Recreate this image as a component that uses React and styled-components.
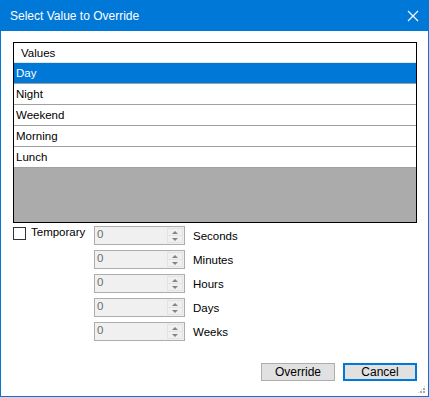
import React from 'react'
import styled, { createGlobalStyle } from 'styled-components'

const Global = createGlobalStyle`
  html, body { margin: 0; padding: 0; background: #fff; }
  * { box-sizing: border-box; }
`

const Window = styled.div`
  width: 429px;
  height: 397px;
  border: 1px solid #0078d7;
  border-top: none;
  background: #fff;
  display: flex;
  flex-direction: column;
  position: relative;
  font-family: "Liberation Sans", Arial, sans-serif;
  font-size: 11.5px;
  color: #000;
`

const TitleBar = styled.div`
  height: 31px;
  margin: 0 -1px;
  background: #0078d7;
  color: #fff;
  display: flex;
  align-items: center;
  justify-content: space-between;
  padding: 0 10px 0 10px;
  font-size: 12px;
`

const CloseIcon = () => (
  <svg width="12" height="12" viewBox="0 0 12 12">
    <path d="M1 1 L11 11 M11 1 L1 11" stroke="#fff" strokeWidth="1.2" />
  </svg>
)

const Body = styled.div`
  flex: 1;
  display: flex;
  flex-direction: column;
  padding: 11px 11px 0 12px;
`

const List = styled.div`
  height: 181px;
  border: 1px solid #000;
  background: #ababab;
  display: flex;
  flex-direction: column;
`

const Header = styled.div`
  height: 20px;
  background: #fff;
  border-bottom: 1px solid #e5e5e5;
  padding-left: 7px;
  display: flex;
  align-items: center;
`

const Row = styled.div`
  height: 21px;
  padding-left: 2px;
  display: flex;
  align-items: center;
  background: ${p => (p.$selected ? '#0078d7' : '#fff')};
  color: ${p => (p.$selected ? '#fff' : '#000')};
  border-bottom: 1px solid #a0a0a0;
`

const Options = styled.div`
  display: grid;
  grid-template-columns: 81px 99px auto;
  grid-auto-rows: 19px;
  row-gap: 5px;
  margin-top: 3px;
`

const CheckCell = styled.label`
  display: flex;
  align-items: flex-start;
  gap: 5px;
`

const Box = styled.span`
  width: 13px;
  height: 13px;
  border: 1px solid #333;
  background: #fff;
  margin-top: 1px;
`

const Spinner = styled.div`
  width: 91px;
  height: 19px;
  border: 1px solid #adadad;
  background: #f0f0f0;
  display: flex;
  color: #6d6d6d;
`

const SpinValue = styled.div`
  flex: 1;
  padding-left: 2px;
  line-height: 15px;
`

const SpinButtons = styled.div`
  width: 16px;
  margin: 1px 1px 1px 0;
  border: 1px solid #e3e3e3;
  display: flex;
  flex-direction: column;
`

const SpinHalf = styled.div`
  flex: 1;
  display: flex;
  align-items: center;
  justify-content: center;
  & + & { border-top: 1px solid #e3e3e3; }
`

const Arrow = styled.span`
  width: 0;
  height: 0;
  border-left: 3px solid transparent;
  border-right: 3px solid transparent;
  ${p => (p.$down ? 'border-top: 3px solid #838383;' : 'border-bottom: 3px solid #838383;')}
`

const UnitLabel = styled.div`
  line-height: 19px;
  padding-top: 1px;
`

const Buttons = styled.div`
  margin-top: auto;
  margin-bottom: 15px;
  display: flex;
  justify-content: flex-end;
  gap: 8px;
`

const Button = styled.button`
  width: 74px;
  height: 18px;
  font-family: inherit;
  font-size: 12px;
  padding: 0;
  background: #e1e1e1;
  color: #000;
  border: ${p => (p.$primary ? '2px solid #0078d7' : '1px solid #adadad')};
  outline: none;
`

const Grip = styled.div`
  position: absolute;
  right: 2px;
  bottom: 2px;
  width: 9px;
  height: 9px;
  background:
    radial-gradient(circle at 1px 1px, #a8a8a8 1px, transparent 1.1px) 0 0 / 3px 3px;
  clip-path: polygon(100% 0, 100% 100%, 0 100%);
`

const values = ['Day', 'Night', 'Weekend', 'Morning', 'Lunch']
const units = ['Seconds', 'Minutes', 'Hours', 'Days', 'Weeks']

const App = () => {
  return (
    <>
      <Global />
      <Window>
        <TitleBar>
          <span>Select Value to Override</span>
          <CloseIcon />
        </TitleBar>
        <Body>
          <List>
            <Header>Values</Header>
            {values.map((v, i) => (
              <Row key={v} $selected={i === 0}>{v}</Row>
            ))}
          </List>
          <Options>
            {units.map((u, i) => (
              <React.Fragment key={u}>
                {i === 0 ? (
                  <CheckCell>
                    <Box />
                    <span>Temporary</span>
                  </CheckCell>
                ) : (
                  <div />
                )}
                <Spinner>
                  <SpinValue>0</SpinValue>
                  <SpinButtons>
                    <SpinHalf><Arrow /></SpinHalf>
                    <SpinHalf><Arrow $down /></SpinHalf>
                  </SpinButtons>
                </Spinner>
                <UnitLabel>{u}</UnitLabel>
              </React.Fragment>
            ))}
          </Options>
          <Buttons>
            <Button>Override</Button>
            <Button $primary>Cancel</Button>
          </Buttons>
        </Body>
        <Grip />
      </Window>
    </>
  )
}

export default App
